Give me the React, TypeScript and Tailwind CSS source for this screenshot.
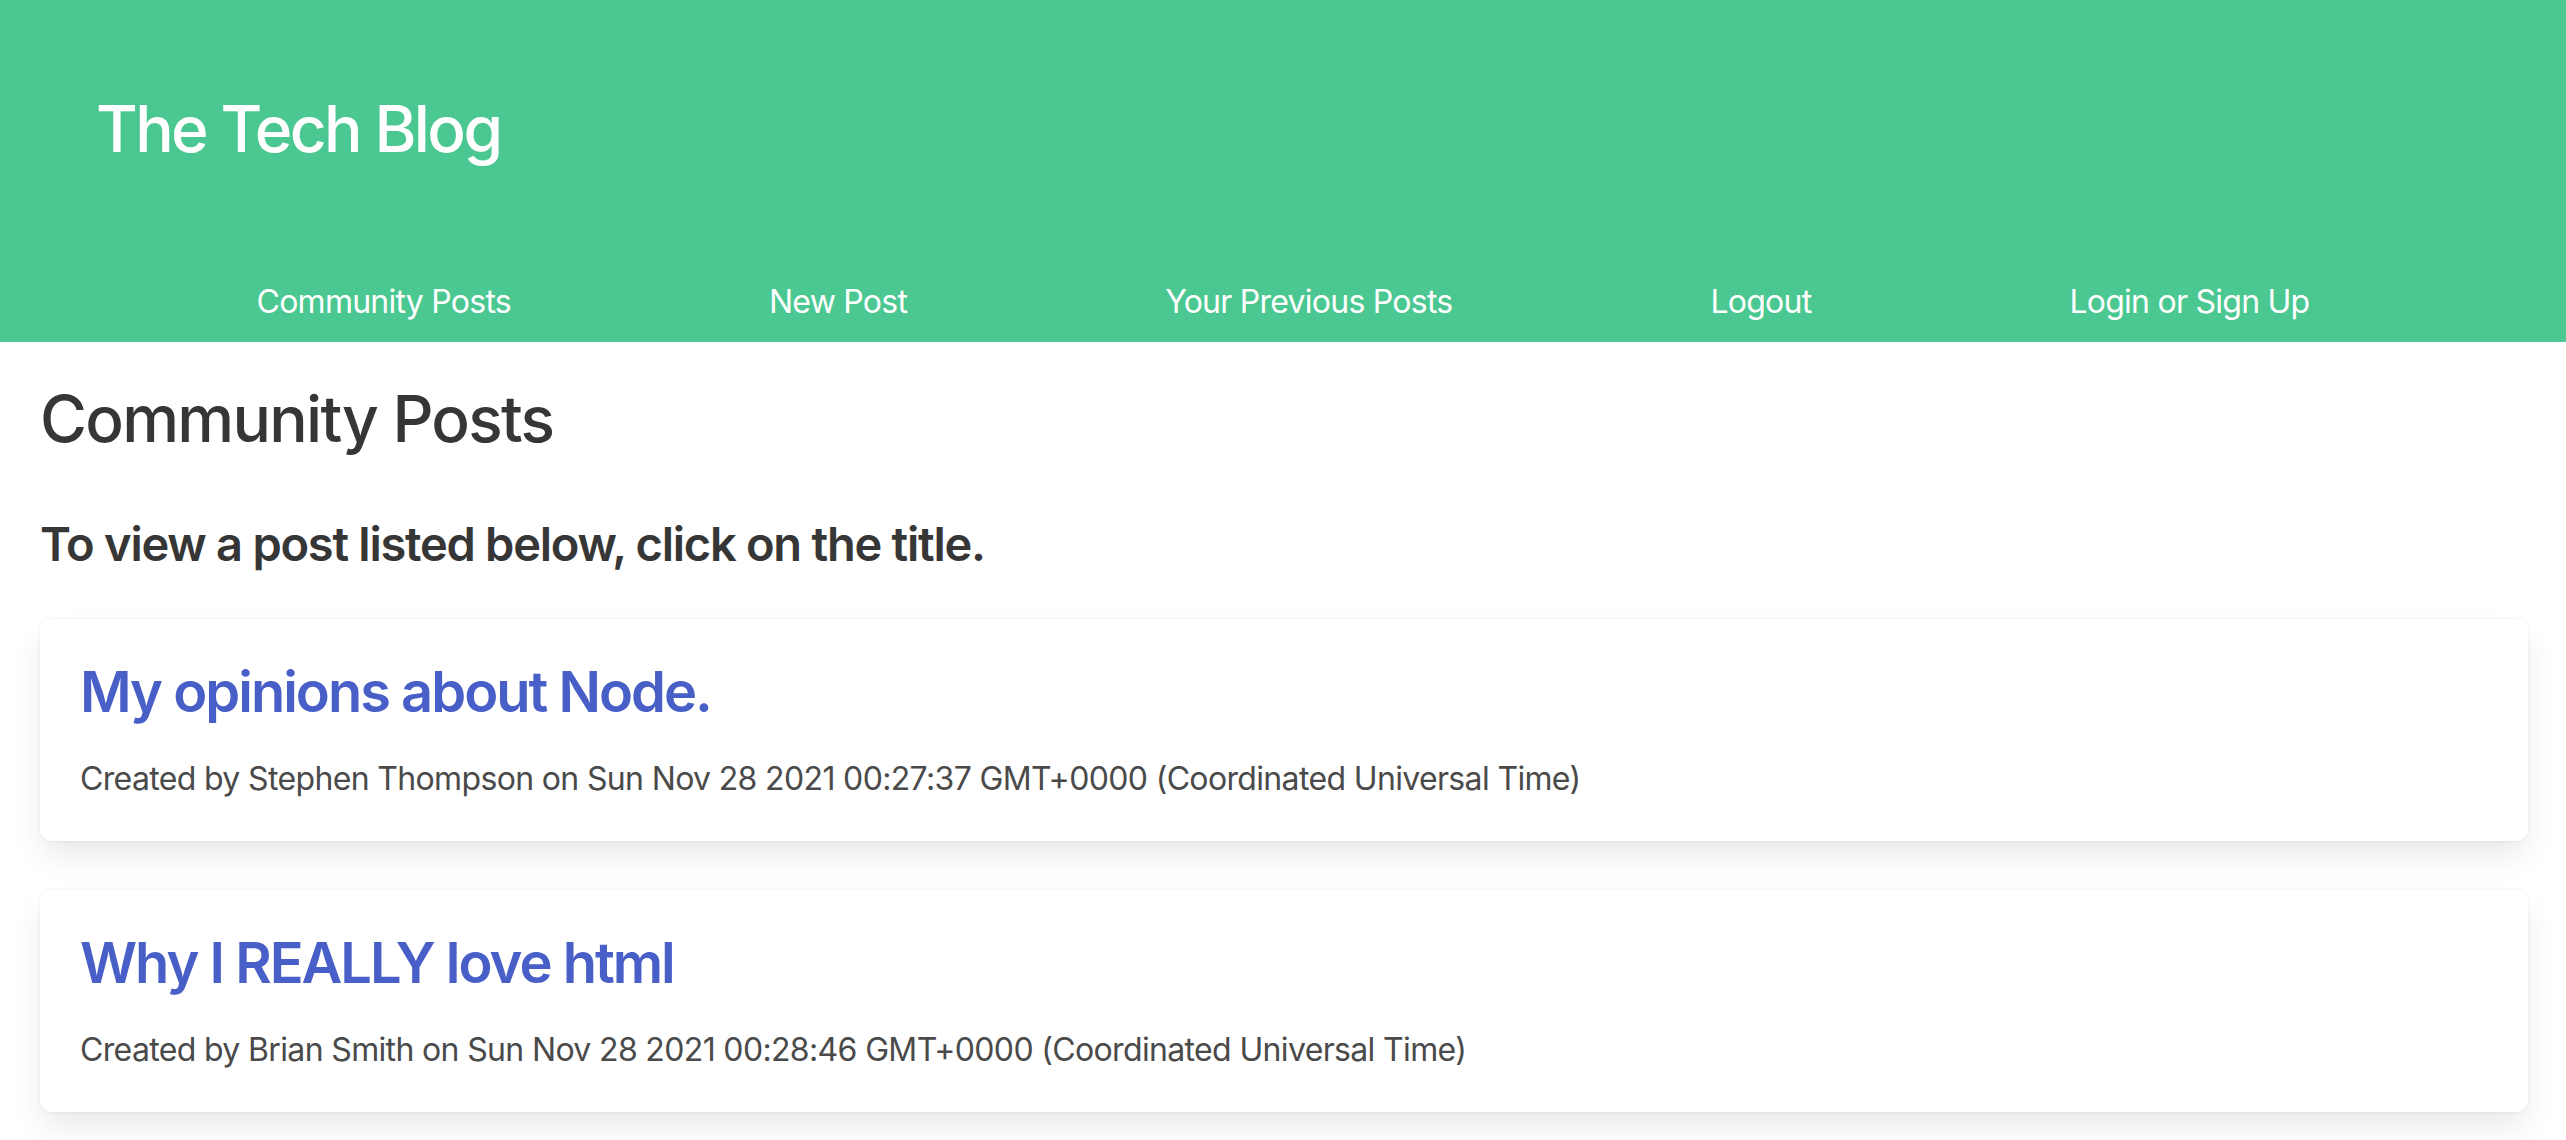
import React from 'react';

const links = ['Community Posts', 'New Post', 'Your Previous Posts', 'Logout', 'Login or Sign Up'];

const posts = [
  {
    title: 'My opinions about Node.',
    meta: 'Created by Stephen Thompson on Sun Nov 28 2021 00:27:37 GMT+0000 (Coordinated Universal Time)',
  },
  {
    title: 'Why I REALLY love html',
    meta: 'Created by Brian Smith on Sun Nov 28 2021 00:28:46 GMT+0000 (Coordinated Universal Time)',
  },
];

const App = () => {
  return (
    <div className="min-h-screen bg-white font-['Inter','Noto_Sans',sans-serif] text-[#363636]">
      <header className="bg-[#4bc891] text-white h-[342px] flex flex-col">
        <h1 className="pl-[96px] pt-[93px] text-[64px] leading-[72px] font-medium tracking-[-2.6px]">
          The Tech Blog
        </h1>
        <nav className="mt-auto pb-[16px] flex justify-center gap-[258px]">
          {links.map((l) => (
            <a key={l} href="#" className="text-[32px] leading-[48px] text-white tracking-[-0.75px]">
              {l}
            </a>
          ))}
        </nav>
      </header>

      <main className="pl-[40px] pr-[38px]">
        <h2 className="pt-[41px] text-[64px] leading-[72px] font-medium tracking-[-1.7px]">
          Community Posts
        </h2>
        <p className="mt-[59px] text-[47px] leading-[60px] font-semibold tracking-[-1.25px]">
          To view a post listed below, click on the title.
        </p>

        <div className="mt-[45px] flex flex-col gap-[49px] pb-[40px]">
          {posts.map((p) => (
            <div
              key={p.title}
              className="bg-white rounded-[12px] px-[40px] pt-[42px] pb-[38px] shadow-[0_16px_32px_-4px_rgba(10,10,10,0.1),0_0_0_2px_rgba(10,10,10,0.02)]"
            >
              <a href="#" className="block text-[56px] leading-[63px] font-semibold text-[#485fc7] tracking-[-2px]">
                {p.title}
              </a>
              <p className="mt-[31px] text-[32px] leading-[48px] text-[#4a4a4a] tracking-[-0.65px]">{p.meta}</p>
            </div>
          ))}
        </div>
      </main>
    </div>
  );
};

export default App;
